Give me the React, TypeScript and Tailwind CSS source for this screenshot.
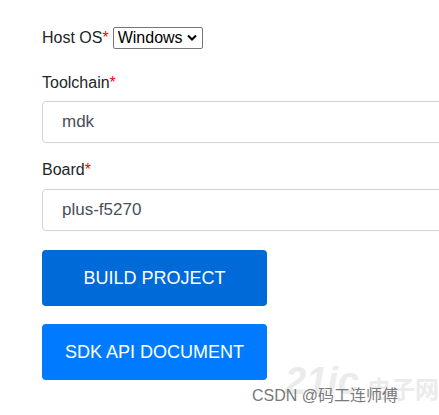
import { useState } from 'react'

function Label({ text }: { text: string }) {
  return (
    <label className="block text-[16px] leading-6 text-[#212529]">
      {text}
      <span className="text-[#ff0000]">*</span>
    </label>
  )
}

export default function App() {
  const [os, setOs] = useState('Windows')
  const [toolchain, setToolchain] = useState('mdk')
  const [board, setBoard] = useState('plus-f5270')

  return (
    <div className="relative w-[439px] h-[415px] overflow-hidden bg-white font-['Liberation_Sans',Arial,sans-serif]">
      <div className="pl-[42px] pt-[27px] w-[480px]">
        {/* Host OS */}
        <div className="flex items-center h-[22px]">
          <span className="text-[16px] leading-6 text-[#212529]">
            Host OS<span className="text-[#ff0000]">*</span>
          </span>
          <div className="relative ml-[4px]">
            <select
              value={os}
              onChange={(e) => setOs(e.target.value)}
              className="appearance-none h-[22px] w-[90px] border border-[#767676] rounded-[2px] bg-white pl-[4px] pr-[18px] text-[16px] leading-5 text-black font-['Liberation_Sans',Arial,sans-serif]"
            >
              <option>Windows</option>
              <option>Linux</option>
              <option>macOS</option>
            </select>
            <svg className="pointer-events-none absolute right-[6px] top-[8px] w-[10px] h-[7px]" viewBox="0 0 10 7">
              <path d="M1 1.5 L5 5.5 L9 1.5" fill="none" stroke="#000" strokeWidth="2" />
            </svg>
          </div>
        </div>

        {/* Toolchain */}
        <div className="mt-[22px]">
          <Label text="Toolchain" />
          <input
            value={toolchain}
            onChange={(e) => setToolchain(e.target.value)}
            className="mt-[6px] block w-full h-[42px] border border-[#ced4da] rounded-[4px] px-[19px] text-[17px] text-[#495057] outline-none"
          />
        </div>

        {/* Board */}
        <div className="mt-[15px]">
          <Label text="Board" />
          <input
            value={board}
            onChange={(e) => setBoard(e.target.value)}
            className="mt-[7px] block w-full h-[42px] border border-[#ced4da] rounded-[4px] px-[19px] text-[17px] text-[#495057] outline-none"
          />
        </div>

        <button className="mt-[19px] block w-[225px] h-[56px] rounded-[4px] bg-[#006ad9] text-white text-[18px]">
          BUILD PROJECT
        </button>
        <button className="mt-[18px] block w-[225px] h-[56px] rounded-[4px] bg-[#007bff] text-white text-[18px]">
          SDK API DOCUMENT
        </button>
      </div>

      {/* watermark */}
      <div className="absolute left-[285px] top-[362px] flex items-end gap-2 text-[#ebebeb] select-none">
        <span className="text-[38px] font-bold italic leading-none">21ic</span>
        <span className="text-[24px] font-bold leading-none font-['Noto_Sans_CJK_SC',sans-serif]">电子网</span>
      </div>
      <div className="absolute left-[252px] top-[386px] text-[16px] leading-5 text-[#7a7a7a] font-['Liberation_Sans','Noto_Sans_CJK_SC',sans-serif]">
        CSDN @码工连师傅
      </div>
    </div>
  )
}
